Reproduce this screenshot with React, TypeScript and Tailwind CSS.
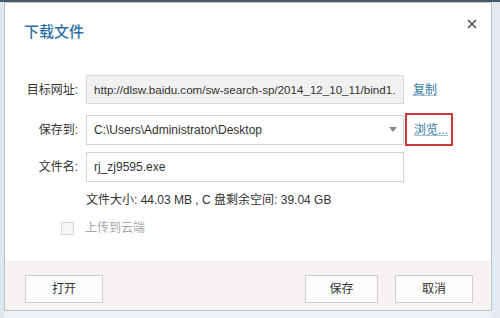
import React from 'react';

const font = { fontFamily: '"Liberation Sans", "Noto Sans CJK SC", sans-serif' };

const Field = ({ label, children, link }: any) => (
  <div className="flex items-center">
    <div className="w-[54px] shrink-0 text-right text-[12px] text-[#333] whitespace-nowrap">{label}</div>
    <div className="ml-[8px] w-[318px] shrink-0">{children}</div>
    {link}
  </div>
);

export default function App() {
  return (
    <div className="w-[500px] h-[318px] bg-[#eef1f4] overflow-hidden flex flex-col" style={font}>
      <div className="h-[2px] bg-[#4b5a6a] shrink-0" />
      <div className="flex flex-1">
        <div className="w-[4px] bg-[#dfe6ee] shrink-0" />
        <div className="w-[488px] h-[309px] shrink-0 bg-white border border-[#b9c3cc] flex flex-col">
          {/* Header */}
          <div className="flex items-start justify-between h-[72px] pl-[19px] pr-[14px]">
            <div className="mt-[18px] text-[15px] text-[#2f6fa8] font-medium">下载文件</div>
            <svg className="mt-[16px]" width="10" height="10" viewBox="0 0 10 10">
              <path d="M1 1 L9 9 M9 1 L1 9" stroke="#555" strokeWidth="1.6" />
            </svg>
          </div>

          {/* Form */}
          <div className="flex flex-col pl-[19px]">
            <Field
              label="目标网址:"
              link={<span className="ml-[9px] text-[12px] text-[#2f7aa5] underline decoration-[#9cc2d8]">复制</span>}
            >
              <div className="h-[29px] bg-[#f1f1f1] border border-[#dadada] flex items-center pl-[7px] text-[11.6px] text-[#333] overflow-hidden whitespace-nowrap">
                http://dlsw.baidu.com/sw-search-sp/2014_12_10_11/bind1.
              </div>
            </Field>

            <div className="mt-[9px]">
              <Field
                label="保存到:"
                link={
                  <div className="ml-[1px] w-[48px] h-[33px] border-2 border-[#cc3a3a] flex items-center pl-[7px]">
                    <span className="text-[12px] text-[#2f7aa5] underline decoration-[#9cc2d8] whitespace-nowrap">浏览...</span>
                  </div>
                }
              >
                <div className="h-[30px] bg-white border border-[#d3d3d3] flex items-center justify-between pl-[7px] pr-[6px] text-[12px] text-[#333]">
                  <span>C:\Users\Administrator\Desktop</span>
                  <svg width="8" height="5" viewBox="0 0 8 5">
                    <path d="M0 0 L8 0 L4 5 Z" fill="#888" />
                  </svg>
                </div>
              </Field>
            </div>

            <div className="mt-[6px]">
              <Field label="文件名:">
                <div className="h-[30px] bg-white border border-[#d3d3d3] flex items-center pl-[7px] text-[12px] text-[#333]">
                  rj_zj9595.exe
                </div>
              </Field>
            </div>

            <div className="mt-[9px] ml-[62px] text-[12px] text-[#333]">
              文件大小: 44.03 MB , C 盘剩余空间: 39.04 GB
            </div>

            <div className="mt-[10px] ml-[37px] flex items-center">
              <div className="w-[13px] h-[13px] border border-[#d8d8d8] bg-[#f6f6f6]" />
              <span className="ml-[11px] text-[12px] text-[#a8a8a8]">上传到云端</span>
            </div>
          </div>

          <div className="flex-1" />

          {/* Footer */}
          <div className="h-[49px] bg-[#f8f3f3] border-t border-[#efe8e8] flex items-start justify-between pt-[13px] pl-[20px] pr-[18px]">
            <button className="w-[78px] h-[28px] border border-[#cfcfcf] bg-[#fdfdfd] text-[12px] text-[#333]">打开</button>
            <div className="flex gap-[17px]">
              <button className="w-[73px] h-[28px] border border-[#cfcfcf] bg-[#fdfdfd] text-[12px] text-[#333]">保存</button>
              <button className="w-[78px] h-[28px] border border-[#cfcfcf] bg-[#fdfdfd] text-[12px] text-[#333]">取消</button>
            </div>
          </div>
        </div>
        <div className="flex-1 bg-[#e4eaf0]" />
      </div>
    </div>
  );
}
